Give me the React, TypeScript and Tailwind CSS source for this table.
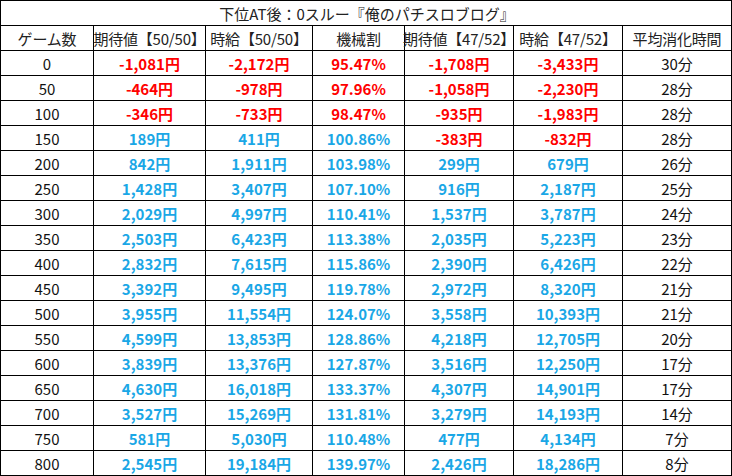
import React from "react";

type Row = [string, string, string, string, string, string, string];

const rows: Row[] = [
  ["0", "-1,081円", "-2,172円", "95.47%", "-1,708円", "-3,433円", "30分"],
  ["50", "-464円", "-978円", "97.96%", "-1,058円", "-2,230円", "28分"],
  ["100", "-346円", "-733円", "98.47%", "-935円", "-1,983円", "28分"],
  ["150", "189円", "411円", "100.86%", "-383円", "-832円", "28分"],
  ["200", "842円", "1,911円", "103.98%", "299円", "679円", "26分"],
  ["250", "1,428円", "3,407円", "107.10%", "916円", "2,187円", "25分"],
  ["300", "2,029円", "4,997円", "110.41%", "1,537円", "3,787円", "24分"],
  ["350", "2,503円", "6,423円", "113.38%", "2,035円", "5,223円", "23分"],
  ["400", "2,832円", "7,615円", "115.86%", "2,390円", "6,426円", "22分"],
  ["450", "3,392円", "9,495円", "119.78%", "2,972円", "8,320円", "21分"],
  ["500", "3,955円", "11,554円", "124.07%", "3,558円", "10,393円", "21分"],
  ["550", "4,599円", "13,853円", "128.86%", "4,218円", "12,705円", "20分"],
  ["600", "3,839円", "13,376円", "127.87%", "3,516円", "12,250円", "17分"],
  ["650", "4,630円", "16,018円", "133.37%", "4,307円", "14,901円", "17分"],
  ["700", "3,527円", "15,269円", "131.81%", "3,279円", "14,193円", "14分"],
  ["750", "581円", "5,030円", "110.48%", "477円", "4,134円", "7分"],
  ["800", "2,545円", "19,184円", "139.97%", "2,426円", "18,286円", "8分"],
];

const headers = [
  "ゲーム数",
  "期待値【50/50】",
  "時給【50/50】",
  "機械割",
  "期待値【47/52】",
  "時給【47/52】",
  "平均消化時間",
];

const cell =
  "h-[25px] border-r border-b border-black flex items-center justify-center whitespace-nowrap overflow-visible";

export default function App() {
  return (
    <div
      className="w-[732px] h-[476px] bg-white text-[15px] leading-none"
      style={{ fontFamily: '"Noto Sans CJK JP", "Noto Sans", sans-serif' }}
    >
      <div className="grid grid-cols-[93px_112px_107px_92px_109px_109px_109px] border-l border-t border-black">
        <div className={`${cell} col-span-7 text-[#222]`}>
          <span className="pl-[2px]">下位AT後：0スルー『俺のパチスロブログ』</span>
        </div>
        {headers.map((h, i) => (
          <div key={i} className={`${cell} text-[#222] tracking-[-0.2px]`}>
            {h}
          </div>
        ))}
        {rows.map((r, ri) =>
          r.map((v, ci) => {
            const isData = ci >= 1 && ci <= 5;
            const neg = v.startsWith("-") || (ci === 3 && parseFloat(v) < 100);
            const color = isData ? (neg ? "text-[#ff0000]" : "text-[#1aa7e6]") : "text-[#111]";
            return (
              <div
                key={`${ri}-${ci}`}
                className={`${cell} ${color} ${isData ? "font-bold" : "font-normal"}`}
              >
                {v}
              </div>
            );
          })
        )}
      </div>
    </div>
  );
}
